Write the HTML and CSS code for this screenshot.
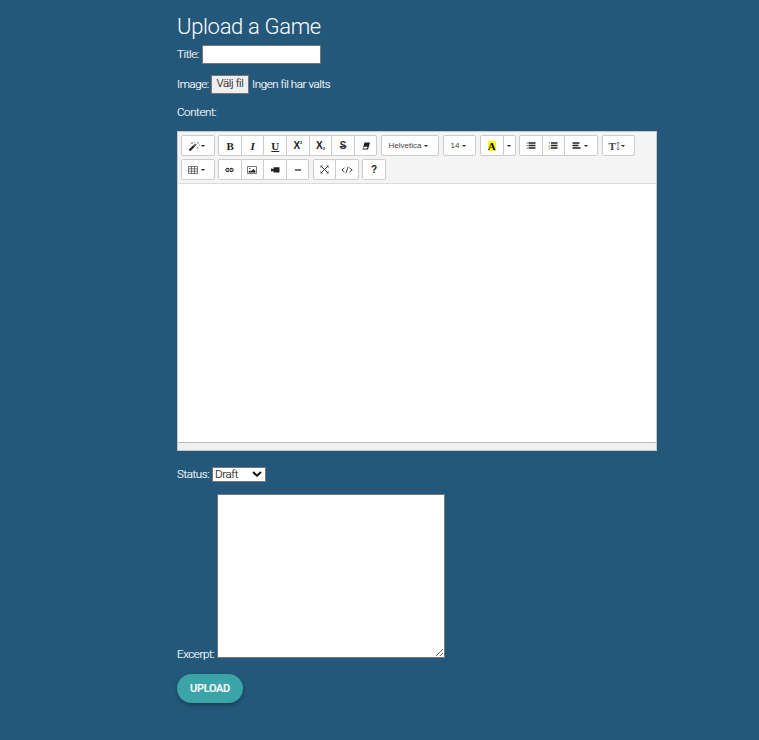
FILE: index.html
```html
<!DOCTYPE html>
<html lang="sv">
<head>
<meta charset="utf-8">
<title>Upload a Game</title>
<link rel="stylesheet" href="styles.css">
</head>
<body>
<main class="page">
  <h1>Upload a Game</h1>
  <div class="row row-title"><label for="title">Title:</label><input id="title" class="title-input" type="text"></div>
  <div class="row row-image"><span>Image:</span><button class="file-button" type="button">Välj fil</button><span class="file-name">Ingen fil har valts</span></div>
  <div class="row row-content">Content:</div>

  <section class="editor">
    <div class="toolbar">
      <div class="tools">
        <div class="group"><button class="wide"><svg width="12" height="12" viewBox="0 0 12 12"><path d="M1.500 10.500 6.200 5.800" stroke="#222" stroke-width="2.200"/><path d="M6.200 5.800 8 4" stroke="#666" stroke-width="2"/><path d="M4 2v2M3 3h2M10 2v1.600M9.200 2.800h1.600M9.500 7v1.600M8.700 7.800h1.600M6.500 1.500v1M11 5h1" stroke="#777" stroke-width=".8"/></svg><i class="caret"></i></button></div>
        <div class="group">
          <button class="serif">B</button><button class="serif italic">I</button><button class="serif under">U</button><button class="script">X<sup>2</sup></button><button class="script">X<sub>2</sub></button><button class="strike">S</button><button><svg width="10" height="10" viewBox="0 0 10 10"><path d="M3.500 1.500H9L7 8.500H1.500Z" fill="#222"/><path d="M2.700 5.700H6.500L6 7.500H2.200Z" fill="#fff"/></svg></button>
        </div>
        <div class="group"><button class="font">Helvetica<i class="caret"></i></button></div>
        <div class="group"><button class="wide size">14<i class="caret"></i></button></div>
        <div class="group"><button class="color"><span>A</span></button><button class="drop"><i class="caret"></i></button></div>
        <div class="group">
          <button><svg width="10" height="9" viewBox="0 0 10 9"><path d="M.5 2h1.500M.5 4.500h1.500M.5 7h1.500" stroke="#777" stroke-width="1.200"/><path d="M2.500 2H9.500M2.500 4.500H9.500M2.500 7H9.500" stroke="#222" stroke-width="1.400"/></svg></button><button><svg width="10" height="9" viewBox="0 0 10 9"><path d="M.5 1h1v2M.5 4.500h1.500M.5 6h1.500v2H.5" fill="none" stroke="#a98" stroke-width=".8"/><path d="M3 2h6.500M3 4.500h6.500M3 7h6.500" stroke="#222" stroke-width="1.400"/></svg></button><button class="wide align"><svg width="9" height="9" viewBox="0 0 9 9"><path d="M.5 2H7.500M.5 4.500H6.500M.5 7H8.500" stroke="#222" stroke-width="1.400"/></svg><i class="caret"></i></button>
        </div>
        <div class="group"><button class="height"><span>T</span><svg width="4" height="10" viewBox="0 0 4 10"><path d="M2 1v8M.5 2.500 2 1l1.500 1.500M.5 7.500 2 9l1.500-1.500" fill="none" stroke="#666" stroke-width=".8"/></svg><i class="caret"></i></button></div>
      </div>
      <div class="tools second">
        <div class="group"><button class="wide"><svg width="10" height="10" viewBox="0 0 10 10"><path d="M.5 1.500h9v7h-9zM.5 3.800h9M.5 6.200h9M3.500 1.500v7M6.500 1.500v7" fill="none" stroke="#555" stroke-width=".8"/></svg><i class="caret gap"></i></button></div>
        <div class="group">
          <button><svg width="11" height="6" viewBox="0 0 11 6"><path d="M5 1.700A2 1.600 0 1 0 5 4.300M6 1.700A2 1.600 0 1 1 6 4.300M3.500 3h4" fill="none" stroke="#333" stroke-width="1.100"/></svg></button><button><svg width="10" height="8" viewBox="0 0 10 8"><path d="M.5.500h9v7h-9z" fill="#fff" stroke="#555" stroke-width=".8"/><circle cx="2.800" cy="2.500" r=".8" fill="#444"/><path d="M1.500 6.500V5.500L3 4.500l1 .8L6.500 3l2 2v1.500Z" fill="#222"/></svg></button><button><svg width="10" height="8" viewBox="0 0 10 8"><path d="M3.500 1.300H9.500V6.500H3.500V5L1 5.500V2.500l2.500.5Z" fill="#222"/></svg></button><button><svg width="8" height="4" viewBox="0 0 8 4"><path d="M1 2h6" stroke="#444" stroke-width="1.500"/></svg></button>
        </div>
        <div class="group"><button><svg width="9" height="9" viewBox="0 0 9 9"><path d="m1.500 1.500 6 6m0-6-6 6" stroke="#333"/><path d="M.5.500H3L.5 3ZM8.500.500V3L6 .5ZM.5 8.500V6L3 8.500ZM8.500 8.500H6L8.500 6Z" fill="#444"/></svg></button><button><svg width="12" height="8" viewBox="0 0 12 8"><path d="M3.500 1.800.8 4l2.700 2.200M8.500 1.800 11.200 4 8.500 6.200M7 .8 5 7.200" fill="none" stroke="#333" stroke-width=".9"/></svg></button></div>
        <div class="group"><button class="help">?</button></div>
      </div>
    </div>
    <div class="canvas" contenteditable="true"></div>
    <div class="statusbar"></div>
  </section>

  <div class="row row-status"><label for="status">Status:</label><button id="status" class="select" type="button"><span>Draft</span><svg width="10" height="6" viewBox="0 0 10 6"><path d="M1 1l4 3.700L9 1" fill="none" stroke="#111" stroke-width="2"/></svg></button></div>
  <div class="row-excerpt"><label for="excerpt">Excerpt:</label><textarea id="excerpt"></textarea></div>
  <button class="upload" type="button">UPLOAD</button>
</main>
</body>
</html>
```
FILE: styles.css
```css
* { box-sizing: border-box; }
html, body { margin: 0; height: 100%; }
body {
  background: #23587a;
  color: #fff;
  font: 300 11.5px/16px Roboto, "Open Sans", sans-serif;
  letter-spacing: -0.38px;
  -webkit-text-stroke: 0.15px currentColor;
  overflow: hidden;
}
button { font: inherit; letter-spacing: inherit; padding: 0; margin: 0; }
svg { display: block; flex: none; }
.page { width: 480px; margin-left: 177px; padding-top: 14px; }
h1 { margin: 0; height: 31px; font-size: 22px; line-height: 26px; font-weight: 300; letter-spacing: -0.33px; white-space: nowrap; -webkit-text-stroke: 0; }
.row { display: flex; align-items: center; white-space: nowrap; }
.row label, .row > span:first-child { width: 35px; }
.row-title { height: 19px; }
.row-title label { width: 25px; margin-top: -2px; }
.title-input { width: 119px; height: 19px; border: 1px solid #767676; background: #fff; padding: 0; }
.row-image { height: 19px; margin-top: 11px; }
.row-image > span { width: 34px; margin-top: -2px; }
.row-image > span:first-child { width: 34px; }
.file-button { width: 38px; height: 19px; border: 1px solid #767676; background: #efefef; color: #222; line-height: 15px; padding-bottom: 2px; }
.file-name { margin-left: 3px; }
.row-content { height: 16px; margin-top: 10px; }

.editor { display: flex; flex-direction: column; height: 320px; margin-top: 11px; border: 1px solid #c8c8c8; background: #fff; -webkit-text-stroke: 0; }
.toolbar { height: 52px; padding: 3px; background: #f4f4f4; border-bottom: 1px solid #dcdcdc; }
.tools { display: flex; gap: 3.600px; height: 24px; }
.tools.second { gap: 3.300px; }
.group { display: flex; }
.group button {
  display: flex; align-items: center; justify-content: center;
  width: 23.600px; height: 21px;
  background: #fff; color: #222; border: 1px solid #ccc;
  font-size: 9px; line-height: 12px; letter-spacing: 0;
}
.group button + button { margin-left: -1px; }
.group button:first-child { border-radius: 2px 0 0 2px; }
.group button:last-child { border-radius: 0 2px 2px 0; }
.group button:only-child { border-radius: 2px; }
.group .wide { width: 33.700px; padding-right: 3px; }
.caret { width: 0; height: 0; border: 2px solid transparent; border-top: 2.500px solid #222; border-bottom: 0; margin-left: 1px; }
.caret.gap { margin-left: 3px; }
.group .serif { font: bold 11px/12px "Liberation Serif", serif; }
.group .italic { font-style: italic; }
.group .under { text-decoration: underline; }
.group .script { font: bold 10px/12px "Liberation Sans", sans-serif; }
.script sup, .script sub { font-size: 4px; line-height: 4px; }
.script sup { margin-bottom: 6px; }
.script sub { margin-top: 6px; }
.group .strike { font: bold 10px/12px "Liberation Sans", sans-serif; color: #333; text-decoration: line-through; }
.group .font { width: 58px; padding-right: 3px; font: 8px/12px "Liberation Sans", sans-serif; color: #444; }
.group .size { padding-right: 2px; font: 8px/12px "Liberation Sans", sans-serif; color: #444; }
.font .caret, .size .caret { margin-left: 3px; }
.color span { background: #ff0; color: #000; font: bold 11px/10px "Liberation Serif", serif; }
.group .drop { width: 13px; }
.drop .caret { margin: 0; }
.align .caret { margin-left: 3px; }
.group .height { width: 33px; padding-right: 3px; font: bold 11px/12px "Liberation Serif", serif; color: #444; }
.group .help { font: bold 10px/12px "Liberation Sans", sans-serif; }
.canvas { flex: 1; outline: 0; }
.statusbar { height: 8px; background: #f0f0f0; border-top: 1px solid #bbb; }

.row-status { height: 16px; margin-top: 15px; }
.select { display: flex; align-items: center; justify-content: space-between; width: 54px; height: 15px; padding: 0 3px 0 2px; border: 1px solid #767676; background: #fff; color: #222; line-height: 13px; }
.row-excerpt { display: flex; align-items: flex-end; height: 164px; margin-top: 12px; line-height: 8px; }
.row-excerpt label { width: 40px; white-space: nowrap; }
textarea { display: block; width: 228px; height: 164px; margin: 0; border: 1px solid #767676; background: #fff; outline: 0; }
.upload { display: block; width: 66px; height: 29px; margin-top: 16px; border: 0; border-radius: 15px; background: #3aa4a8; color: #fff; font-size: 11px; font-weight: 500; letter-spacing: -0.3px; line-height: 29px; box-shadow: 0 2px 4px rgba(0, 0, 0, .3); }
```
